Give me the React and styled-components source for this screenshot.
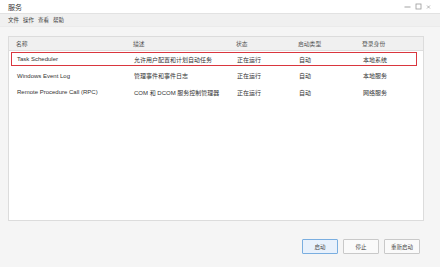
import React from 'react';
import styled, { createGlobalStyle } from 'styled-components';

const GlobalStyle = createGlobalStyle`
  html, body {
    margin: 0;
    padding: 0;
    background: #f5f5f5;
  }
  body {
    font-family: "Liberation Sans", "Noto Sans CJK SC", sans-serif;
    color: #333;
  }
`;

const Window = styled.div`
  width: 440px;
  height: 267px;
  display: flex;
  flex-direction: column;
  background: #f5f5f5;
  overflow: hidden;
`;

const TitleBar = styled.div`
  height: 13px;
  display: flex;
  align-items: center;
  justify-content: space-between;
  padding: 0 9px 0 8px;
  background: #ffffff;
  border-bottom: 1px solid #e2e2e2;
`;

const Title = styled.div`
  font-size: 7px;
  color: #333;
`;

const Controls = styled.div`
  display: flex;
  align-items: center;
  gap: 4px;
`;

const MenuBar = styled.div`
  height: 12px;
  display: flex;
  align-items: center;
  gap: 4px;
  padding: 0 8px;
  background: #f0f0f0;
  border-bottom: 1px solid #ebebeb;
`;

const MenuItem = styled.span`
  font-size: 5.5px;
  color: #444;
`;

const Body = styled.div`
  flex: 1;
  display: flex;
  flex-direction: column;
  padding: 9px 16px 0 8px;
`;

const Panel = styled.div`
  height: 183px;
  background: #ffffff;
  border: 1px solid #dcdcdc;
  display: flex;
  flex-direction: column;
`;

const HeaderRow = styled.div`
  height: 13px;
  display: grid;
  grid-template-columns: 117px 103px 62px 64px 1fr;
  align-items: center;
  padding: 0 7px;
  background: #f0f0f0;
  border-bottom: 1px solid #dedede;
  font-size: 5.8px;
  color: #555;
`;

const Rows = styled.div`
  display: flex;
  flex-direction: column;
  padding-top: 1px;
  gap: 2.5px;
`;

const Row = styled.div`
  height: 14px;
  display: grid;
  grid-template-columns: 117px 103px 62px 64px 1fr;
  align-items: center;
  margin: 0 6px 0 2px;
  padding: 0 5px;
  box-sizing: border-box;
  border: 1.5px solid ${(p) => (p.$selected ? '#d9363e' : 'transparent')};
  font-size: 6px;
  color: #333;
`;

const Footer = styled.div`
  display: flex;
  justify-content: flex-end;
  gap: 5px;
  padding: 18px 4px 0 0;
`;

const Button = styled.button`
  width: 36px;
  height: 15px;
  padding: 0;
  font-family: inherit;
  font-size: 5.5px;
  color: #444;
  background: ${(p) => (p.$primary ? '#e8f1fc' : '#fafafa')};
  border: 1px solid ${(p) => (p.$primary ? '#7aaee0' : '#c9c9c9')};
  border-radius: 1px;
`;

const services = [
  { name: 'Task Scheduler', desc: '允许用户配置和计划自动任务', status: '正在运行', start: '自动', logon: '本地系统', selected: true },
  { name: 'Windows Event Log', desc: '管理事件和事件日志', status: '正在运行', start: '自动', logon: '本地服务' },
  { name: 'Remote Procedure Call (RPC)', desc: 'COM 和 DCOM 服务控制管理器', status: '正在运行', start: '自动', logon: '网络服务' },
];

const App = () => (
  <Window>
    <GlobalStyle />
    <TitleBar>
      <Title>服务</Title>
      <Controls>
        <svg width="7" height="7" viewBox="0 0 7 7">
          <line x1="0.5" y1="4" x2="6.5" y2="4" stroke="#999" strokeWidth="0.9" />
        </svg>
        <svg width="7" height="7" viewBox="0 0 7 7">
          <rect x="1" y="1" width="5" height="5" fill="none" stroke="#999" strokeWidth="0.8" />
        </svg>
        <svg width="5" height="7" viewBox="0 0 5 7">
          <path d="M1 2.5 L4 5.5 M4 2.5 L1 5.5" stroke="#999" strokeWidth="0.7" />
        </svg>
      </Controls>
    </TitleBar>
    <MenuBar>
      <MenuItem>文件</MenuItem>
      <MenuItem>操作</MenuItem>
      <MenuItem>查看</MenuItem>
      <MenuItem>帮助</MenuItem>
    </MenuBar>
    <Body>
      <Panel>
        <HeaderRow>
          <span>名称</span>
          <span>描述</span>
          <span>状态</span>
          <span>启动类型</span>
          <span>登录身份</span>
        </HeaderRow>
        <Rows>
          {services.map((s) => (
            <Row key={s.name} $selected={s.selected}>
              <span>{s.name}</span>
              <span>{s.desc}</span>
              <span>{s.status}</span>
              <span>{s.start}</span>
              <span>{s.logon}</span>
            </Row>
          ))}
        </Rows>
      </Panel>
      <Footer>
        <Button $primary>启动</Button>
        <Button>停止</Button>
        <Button>重新启动</Button>
      </Footer>
    </Body>
  </Window>
);

export default App;
